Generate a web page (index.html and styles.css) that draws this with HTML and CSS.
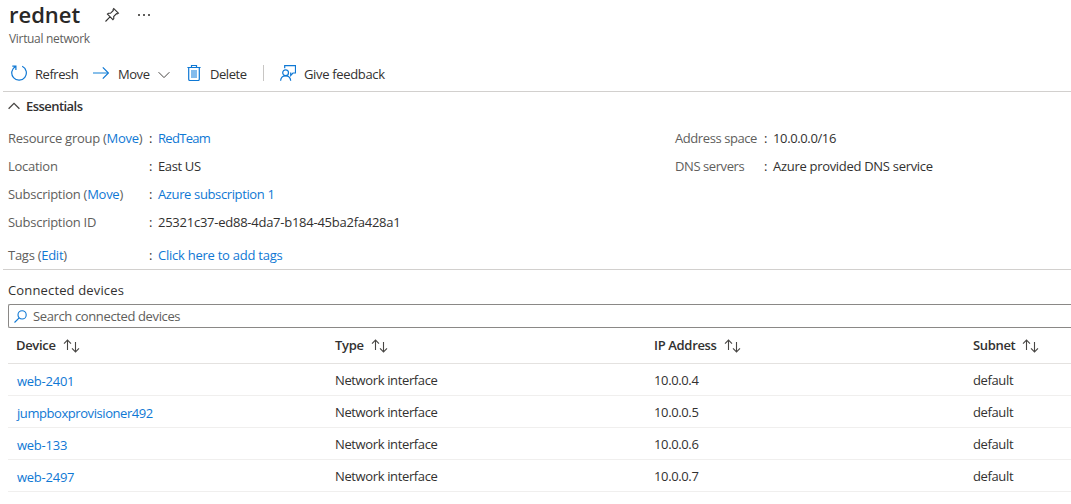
FILE: index.html
```html
<!DOCTYPE html>
<html lang="en">
<head>
<meta charset="utf-8">
<title>rednet - Virtual network</title>
<link rel="stylesheet" href="styles.css">
</head>
<body>
<svg class="sprite" aria-hidden="true">
  <symbol id="sort" viewBox="0 0 17 14"><path d="M4.5 11V1.2M1 4.6 4.5 1.1 8 4.6M12.5 3v9.8M9 9.4l3.5 3.5L16 9.4"/></symbol>
</svg>
<header class="heading">
  <div class="title-row">
    <h1>rednet</h1>
    <svg class="pin" viewBox="0 0 16 16"><path d="M9.8 1.6 14.4 6.2 13.2 6.9 12.5 6.7 9.7 9.5 9.8 11.5 8.9 12.6 3.4 7.1 4.5 6.2 6.5 6.3 9.3 3.5 9.1 2.5ZM6 9.9 1.5 14.5"/></svg>
    <span class="dots"><i></i><i></i><i></i></span>
  </div>
  <p class="kind">Virtual network</p>
</header>
<nav class="toolbar">
  <svg class="icon refresh" viewBox="0 0 16 16"><path d="M11.2 1.3A7.3 7.3 0 1 1 4.5 1.5M1.3 1.2H4.9V4.9"/></svg>
  <span class="t-refresh">Refresh</span>
  <svg class="icon move" viewBox="0 0 16 16"><path class="soft" d="M0 8H15"/><path d="M9.8 2.4 15.4 8 9.8 13.6"/></svg>
  <span class="t-move">Move</span>
  <svg class="chev down" viewBox="0 0 12 8"><path d="M.6 1.2 6 6.6 11.4 1.2"/></svg>
  <svg class="icon trash" viewBox="0 0 14 16"><path d="M.4 2.5H13.6M4.5 2.3V.5H9.5V2.3M1.7 2.6V14.2Q1.7 15.5 3 15.5H11Q12.3 15.5 12.3 14.2V2.6"/><path class="fill" d="M4 5H10V13H4Z"/></svg>
  <span class="t-delete">Delete</span>
  <i class="divider"></i>
  <svg class="icon feedback" viewBox="0 0 16 16"><path d="M4.7 3.2V.6H15.5V8H13L10.7 10.4V7.5M.6 15.8C.8 12.2 3 10.8 5.6 10.8S10.4 12.2 10.7 15.8"/><circle cx="5.6" cy="7.7" r="2.9"/></svg>
  <span class="t-feedback">Give feedback</span>
</nav>
<section class="essentials">
  <h2><svg class="chev up" viewBox="0 0 12 8"><path d="M.6 6.8 6 1.4 11.4 6.8"/></svg><span>Essentials</span></h2>
  <div class="props">
    <dl>
      <div><dt>Resource group (<a>Move</a>)</dt><dd><a class="tight">RedTeam</a></dd></div>
      <div><dt>Location</dt><dd><span>East US</span></dd></div>
      <div><dt>Subscription (<a>Move</a>)</dt><dd><a>Azure subscription 1</a></dd></div>
      <div><dt>Subscription ID</dt><dd><span class="loose">25321c37-ed88-4da7-b184-45ba2fa428a1</span></dd></div>
      <div class="tags"><dt>Tags (<a>Edit</a>)</dt><dd><a class="loose">Click here to add tags</a></dd></div>
    </dl>
    <dl class="right">
      <div><dt>Address space</dt><dd><span>10.0.0.0/16</span></dd></div>
      <div><dt>DNS servers</dt><dd><span class="dns">Azure provided DNS service</span></dd></div>
    </dl>
  </div>
</section>
<main>
  <h3>Connected devices</h3>
  <div class="search">
    <svg viewBox="0 0 13 13"><circle cx="8.1" cy="4.9" r="4.1"/><path d="M5.2 7.8.5 12.5"/></svg>
    <span>Search connected devices</span>
  </div>
  <div class="grid">
    <div class="row head"><b>Device<svg><use href="#sort"/></svg></b><b>Type<svg><use href="#sort"/></svg></b><b>IP Address<svg><use href="#sort"/></svg></b><b>Subnet<svg><use href="#sort"/></svg></b></div>
    <div class="row"><a>web-2401</a><span>Network interface</span><span>10.0.0.4</span><span>default</span></div>
    <div class="row"><a class="long">jumpboxprovisioner492</a><span>Network interface</span><span>10.0.0.5</span><span>default</span></div>
    <div class="row"><a>web-133</a><span>Network interface</span><span>10.0.0.6</span><span>default</span></div>
    <div class="row"><a>web-2497</a><span>Network interface</span><span>10.0.0.7</span><span>default</span></div>
  </div>
</main>
</body>
</html>
```
FILE: styles.css
```css
* { box-sizing: border-box; }
body { margin: 0; height: 504px; overflow: hidden; background: #fff; color: #323130; font: 13px/18px "Segoe UI", "Open Sans", sans-serif; letter-spacing: -.37px; white-space: nowrap; }
h1, h2, h3, p, dl, dd { margin: 0; font-weight: 400; }
svg { display: block; flex: none; fill: none; stroke: #484644; }
a { color: #0f78d4; }
.sprite { width: 0; height: 0; position: absolute; }
.heading { height: 56px; padding-left: 9px; }
.title-row { display: flex; height: 30px; }
h1 { width: 95px; font-size: 22px; line-height: 28px; font-weight: 600; color: #292827; letter-spacing: 0; }
.pin { width: 16px; height: 16px; margin-top: 7px; stroke: #323130; stroke-width: 1.1; }
.dots { display: flex; gap: 3px; margin: 14px 0 0 18px; }
.dots i { width: 2px; height: 2px; background: #605e5c; }
.kind { font-size: 12px; color: #605e5c; letter-spacing: -.32px; line-height: 18px; }
.toolbar { display: flex; align-items: center; height: 36px; margin-left: 3px; padding: 0 0 1px 8px; border-bottom: 1px solid #d2d0ce; letter-spacing: -.46px; }
.toolbar span { padding-top: 2px; }
.icon { width: 16px; height: 16px; stroke: #0f78d4; stroke-width: 1.2; }
.soft { stroke: #69afe5; stroke-width: 1.6; }
.fill { fill: #83bbec; stroke: none; }
.t-refresh { width: 58px; margin-left: 8px; }
.t-move { width: 40px; margin-left: 9px; }
.chev { width: 12px; height: 8px; }
.down { margin-top: 3px; }
.trash { width: 14px; margin-left: 17px; }
.t-delete { width: 53px; margin-left: 9px; }
.divider { width: 1px; height: 16px; background: #c8c6c4; margin-right: 16px; }
.toolbar .t-feedback { margin-left: 8px; letter-spacing: -.34px; }
.essentials { height: 178px; margin-left: 3px; border-bottom: 1px solid #d2d0ce; }
h2 { display: flex; align-items: center; gap: 6px; height: 28px; padding-left: 5px; font-size: 13px; font-weight: 600; letter-spacing: -.55px; }
.up { stroke-width: 1.3; }
.props { display: flex; padding: 4px 0 0 5px; }
.props dl { width: 667px; }
.props dl > div { display: flex; height: 28px; line-height: 28px; }
.props .tags { margin-top: 5px; }
dt { width: 141px; color: #605e5c; letter-spacing: -.27px; }
dd { display: flex; }
dd::before { content: ":"; width: 9px; }
.loose { letter-spacing: -.25px; }
.dns { letter-spacing: -.3px; }
.tight { letter-spacing: -.7px; }
.props .right { width: auto; }
.right dt { width: 89px; letter-spacing: -.42px; }
main { padding-left: 8px; }
h3 { height: 34px; line-height: 40px; font-size: 13px; letter-spacing: .15px; }
.search { display: flex; align-items: center; height: 24px; border: 1px solid #8a8886; border-right: 0; border-radius: 2px 0 0 2px; padding-left: 5px; gap: 6px; color: #605e5c; }
.search svg { width: 13px; height: 13px; stroke: #0f78d4; stroke-width: 1.1; }
.row { display: grid; grid-template-columns: 319px 319px 319px 1fr; height: 32px; padding-left: 8px; line-height: 32px; border-bottom: 1px solid #f0efee; }
.row a { padding: 1px 0 0 1px; letter-spacing: -.25px; }
.row .long { letter-spacing: -.43px; }
.head { height: 36px; line-height: 35px; border-color: #e4e2e0; }
.head b { display: flex; align-items: center; gap: 7px; font-weight: 600; letter-spacing: -.33px; }
.head svg { width: 17px; height: 14px; margin-top: 1px; stroke-width: 1.1; }
```
